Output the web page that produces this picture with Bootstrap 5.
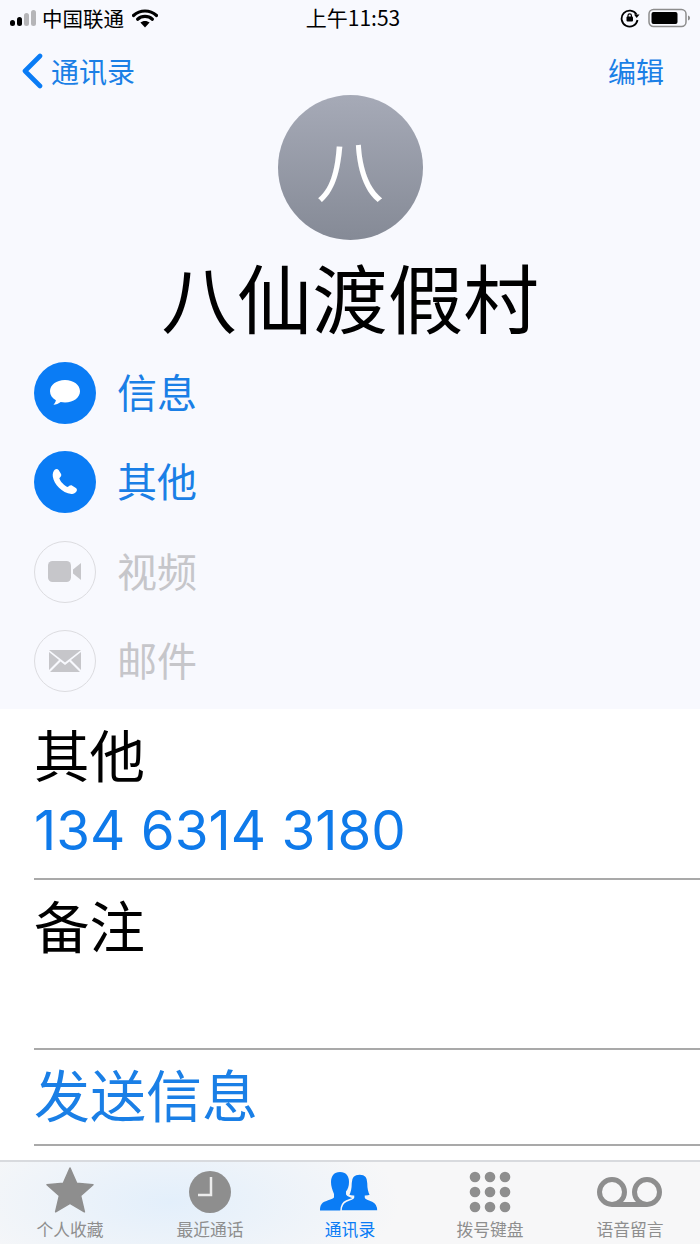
<!DOCTYPE html>
<html lang="zh-CN">
<head>
    <meta charset="UTF-8">
    <meta name="viewport" content="width=device-width, initial-scale=1.0">
    <title>八仙渡假村</title>
    <link href="https://cdn.jsdelivr.net/npm/bootstrap@5.3.0/dist/css/bootstrap.min.css" rel="stylesheet">
    <style>
        body {
            background-color: #fff;
            font-family: "Noto Sans CJK SC", "Liberation Sans", sans-serif;
        }
        .phone-page {
            width: 700px;
            height: 1244px;
            overflow: hidden;
        }
        .top-area {
            height: 709px;
            background-color: #f8f9fe;
        }
        .status-bar {
            height: 36px;
            padding: 0 8px 0 10px;
            font-size: 20.5px;
            color: #000;
        }
        .status-left {
            width: 245px;
        }
        .status-right {
            width: 241px;
        }
        .status-time {
            font-size: 21px;
        }
        .top-nav {
            height: 59px;
            padding: 10px 36px 0 21px;
            font-size: 28px;
            color: #1a7fe6;
        }
        .avatar-circle {
            width: 145px;
            height: 145px;
            border-radius: 50%;
            background: linear-gradient(#a6aab7, #858a96);
            color: #fff;
            font-size: 68px;
            font-weight: 400;
            line-height: 1;
        }
        .contact-title {
            height: 122px;
            padding-bottom: 11px;
            font-size: 75.5px;
            line-height: 1;
            color: #000;
        }
        .action-list {
            padding-left: 34px;
            gap: 27.3px;
        }
        .action-circle {
            width: 62px;
            height: 62px;
            border-radius: 50%;
            background-color: #0a7cf5;
        }
        .action-off .action-circle {
            background-color: transparent;
            border: 1.5px solid #dcdce0;
        }
        .action-label {
            font-size: 40px;
            line-height: 1;
            margin-left: 21px;
            padding-bottom: 4px;
            color: #1a7fe6;
        }
        .action-off .action-label {
            color: #c6c6ca;
        }
        .info-area {
            flex: 1;
            padding-left: 34px;
        }
        .info-row {
            border-bottom: 2px solid #a9a9a9;
        }
        .row-phone { height: 171px; }
        .row-note { height: 170px; }
        .row-send { height: 96px; }
        .row-label {
            font-size: 55.5px;
            line-height: 1;
            padding-top: 17px;
            color: #000;
        }
        .row-number {
            font-family: Inter, "Liberation Sans", sans-serif;
            font-size: 54.7px;
            line-height: 1;
            margin-top: 21px;
            color: #0f7aea;
        }
        .row-send-text {
            font-size: 56px;
            line-height: 1;
            padding-top: 15px;
            color: #1a7fe6;
        }
        .tab-bar {
            height: 84px;
            border-top: 2px solid #d8dade;
            background: radial-gradient(ellipse 230px 90px at 170px 40px, #e3effb, #f7f7f8);
        }
        .tab-item {
            width: 140px;
            color: #8e8e8e;
            font-size: 16.8px;
            line-height: 1;
        }
        .tab-item svg {
            display: block;
            height: 50px;
            margin-top: 4px;
            margin-bottom: 5px;
        }
        .tab-active {
            color: #0a7cf5;
        }
    </style>
</head>
<body>
    <div class="phone-page d-flex flex-column">
        <div class="top-area">
            <div class="status-bar d-flex align-items-center justify-content-between">
                <div class="status-left d-flex align-items-center">
                    <svg width="28" height="18" viewBox="0 0 28 18">
                        <rect x="0" y="11" width="5" height="6" rx="2.5" fill="#000"/>
                        <rect x="7" y="8" width="5" height="9" rx="2.5" fill="#000"/>
                        <rect x="14" y="4" width="5" height="13" rx="2.5" fill="#b5b5b8"/>
                        <rect x="21" y="1" width="5" height="16" rx="2.5" fill="#b5b5b8"/>
                    </svg>
                    <span class="ms-1">中国联通</span>
                    <svg class="ms-2" width="26" height="20" viewBox="0 0 26 20">
                        <path d="M13 3C8.5 3 4.6 4.7 1.5 7.5M13 3c4.5 0 8.4 1.7 11.5 4.5" fill="none" stroke="#000" stroke-width="3.2" stroke-linecap="round"/>
                        <path d="M5.6 11.2C7.6 9.4 10.1 8.4 13 8.4s5.4 1 7.4 2.8" fill="none" stroke="#000" stroke-width="3.2" stroke-linecap="round"/>
                        <path d="M13 19.5l-4.6-5c1.2-1 2.8-1.6 4.6-1.6s3.4.6 4.6 1.6z" fill="#000"/>
                    </svg>
                </div>
                <div class="status-time">上午11:53</div>
                <div class="status-right d-flex align-items-center justify-content-end">
                    <svg width="20" height="20" viewBox="0 0 20 20" class="me-2">
                        <path d="M16.5 6.500A8 8 0 1 0 17.5 12" fill="none" stroke="#000" stroke-width="1.8"/>
                        <path d="M14 6.500h5.500L16.700 10z" fill="#000"/>
                        <rect x="6.500" y="8.500" width="6.500" height="5" rx="1" fill="#000"/>
                        <path d="M8 9V7.500a1.700 1.700 0 0 1 3.400 0V9" fill="none" stroke="#000" stroke-width="1.2"/>
                    </svg>
                    <svg width="44" height="20" viewBox="0 0 44 20">
                        <rect x="1" y="1.500" width="37" height="17" rx="4.500" fill="none" stroke="#8d8d8d" stroke-width="1.500"/>
                        <rect x="3.500" y="4" width="26" height="12" rx="2" fill="#000"/>
                        <path d="M40 7.500c1.500.4 2 1.400 2 2.500s-.5 2.100-2 2.500z" fill="#8d8d8d"/>
                    </svg>
                </div>
            </div>
            <div class="top-nav d-flex align-items-center justify-content-between">
                <div class="d-flex align-items-center">
                    <svg width="22" height="36" viewBox="0 0 22 36" class="me-2">
                        <path d="M19 3L4 18l15 15" fill="none" stroke="#0a7cf5" stroke-width="4.600" stroke-linecap="round" stroke-linejoin="round"/>
                    </svg>
                    <span>通讯录</span>
                </div>
                <span>编辑</span>
            </div>
            <div class="d-flex justify-content-center">
                <div class="avatar-circle d-flex align-items-center justify-content-center">八</div>
            </div>
            <div class="contact-title d-flex align-items-center justify-content-center">八仙渡假村</div>
            <div class="action-list d-flex flex-column">
                <div class="d-flex align-items-center">
                    <div class="action-circle d-flex align-items-center justify-content-center">
                        <svg width="34" height="30" viewBox="0 0 34 30">
                            <path d="M17 2C8.200 2 2 7 2 13.200c0 3.800 2.300 7 5.900 9-.3 1.700-1.300 3.300-2.500 4.500 2.700-.1 5.300-1.100 7.300-2.700 1.400.3 2.800.4 4.300.4 8.800 0 15-5 15-11.200S25.800 2 17 2z" fill="#fff"/>
                        </svg>
                    </div>
                    <div class="action-label">信息</div>
                </div>
                <div class="d-flex align-items-center">
                    <div class="action-circle d-flex align-items-center justify-content-center">
                        <svg width="30" height="30" viewBox="0 0 30 30">
                            <path d="M5 2.500c1.200-.9 2.800-.7 3.600.6l2.300 3.700c.6 1 .5 2.200-.3 3l-1.300 1.400c1.200 3.500 4.700 7.200 8.500 8.900l1.500-1.300c.9-.7 2.100-.8 3-.1l3.600 2.400c1.200.8 1.400 2.400.5 3.500-1.300 1.700-3 2.700-5 2.400C12 25.800 4 17.500 2.800 9.500 2.400 6.800 3.300 4 5 2.500z" fill="#fff"/>
                        </svg>
                    </div>
                    <div class="action-label">其他</div>
                </div>
                <div class="d-flex align-items-center action-off">
                    <div class="action-circle d-flex align-items-center justify-content-center">
                        <svg width="34" height="22" viewBox="0 0 34 22">
                            <rect x="0" y="0" width="23" height="21" rx="4.500" fill="#c6c6ca"/>
                            <path d="M25 8.500L33 2v17l-8-6.500z" fill="#c6c6ca"/>
                        </svg>
                    </div>
                    <div class="action-label">视频</div>
                </div>
                <div class="d-flex align-items-center action-off">
                    <div class="action-circle d-flex align-items-center justify-content-center">
                        <svg width="32" height="22" viewBox="0 0 32 22">
                            <path d="M0 0h32L16 12.500z" fill="#c6c6ca"/>
                            <path d="M0 2v18l10-10zM32 2v18L22 10z" fill="#c6c6ca"/>
                            <path d="M1 22l10.500-10.500L16 15l4.500-3.500L31 22z" fill="#c6c6ca"/>
                        </svg>
                    </div>
                    <div class="action-label">邮件</div>
                </div>
            </div>
        </div>

        <div class="info-area">
            <div class="info-row row-phone">
                <div class="row-label">其他</div>
                <div class="row-number">134 6314 3180</div>
            </div>
            <div class="info-row row-note">
                <div class="row-label">备注</div>
            </div>
            <div class="info-row row-send">
                <div class="row-send-text">发送信息</div>
            </div>
        </div>

        <div class="tab-bar d-flex justify-content-between">
            <div class="tab-item d-flex flex-column align-items-center">
                <svg width="48" height="50" viewBox="0 0 48 50">
                    <path d="M24 2l6.700 15.300 16.300 1.500-12.400 10.800 3.800 16.200L24 37.300 9.600 45.800l3.800-16.200L1 18.800l16.300-1.500z" fill="#8e8e8e" stroke="#8e8e8e" stroke-width="1.500" stroke-linejoin="round"/>
                </svg>
                <span>个人收藏</span>
            </div>
            <div class="tab-item d-flex flex-column align-items-center">
                <svg width="44" height="50" viewBox="0 0 44 50">
                    <circle cx="22" cy="26" r="21" fill="#8e8e8e"/>
                    <path d="M23 11v18H10" fill="none" stroke="#ececec" stroke-width="2.500"/>
                </svg>
                <span>最近通话</span>
            </div>
            <div class="tab-item tab-active d-flex flex-column align-items-center">
                <svg width="60" height="50" viewBox="0 0 60 50">
                    <path d="M20 6c6 0 9 4 9 10 0 4-1.200 7.500-3 9.500v2.500c0 2 4 3 7 4.500-4 1.500-7 3-9 6-1.500 2-2 3.500-2.300 6H0c0-5 1.500-7.500 5-9 4-1.700 9-2.500 9-4.500v-3C12.200 23.500 11 20 11 16c0-6 3-10 9-10z" fill="#0a7cf5"/>
                    <path d="M40 8c5 0 8 3.500 8 9 0 5 .8 9 2.500 12-1.500 1-3.500 1.200-5 1.300v1.200c0 1.500 3.500 2 7 3.500 3.500 1.500 5.500 4 5.500 10H21c0-6 2-8.500 5.500-10 3.500-1.500 7-2 7-3.500v-1.200c-1.500-.1-3.500-.3-5-1.300 1.700-3 2.500-7 2.500-12 0-5.500 3-9 8.500-9z" fill="#0a7cf5" stroke="#f7f7f8" stroke-width="1.500"/>
                </svg>
                <span>通讯录</span>
            </div>
            <div class="tab-item d-flex flex-column align-items-center">
                <svg width="42" height="50" viewBox="0 0 42 50">
                    <g fill="#8e8e8e">
                        <circle cx="6" cy="11" r="5.300"/><circle cx="21" cy="11" r="5.300"/><circle cx="36" cy="11" r="5.300"/>
                        <circle cx="6" cy="26" r="5.300"/><circle cx="21" cy="26" r="5.300"/><circle cx="36" cy="26" r="5.300"/>
                        <circle cx="6" cy="41" r="5.300"/><circle cx="21" cy="41" r="5.300"/><circle cx="36" cy="41" r="5.300"/>
                    </g>
                </svg>
                <span>拨号键盘</span>
            </div>
            <div class="tab-item d-flex flex-column align-items-center">
                <svg width="66" height="50" viewBox="0 0 66 50">
                    <g fill="none" stroke="#8e8e8e" stroke-width="5">
                        <circle cx="15" cy="26" r="12.500"/>
                        <circle cx="50" cy="26" r="12.500"/>
                        <path d="M15 38.500h35"/>
                    </g>
                </svg>
                <span>语音留言</span>
            </div>
        </div>
    </div>
    <script src="https://cdn.jsdelivr.net/npm/bootstrap@5.3.0/dist/js/bootstrap.bundle.min.js"></script>
</body>
</html>
